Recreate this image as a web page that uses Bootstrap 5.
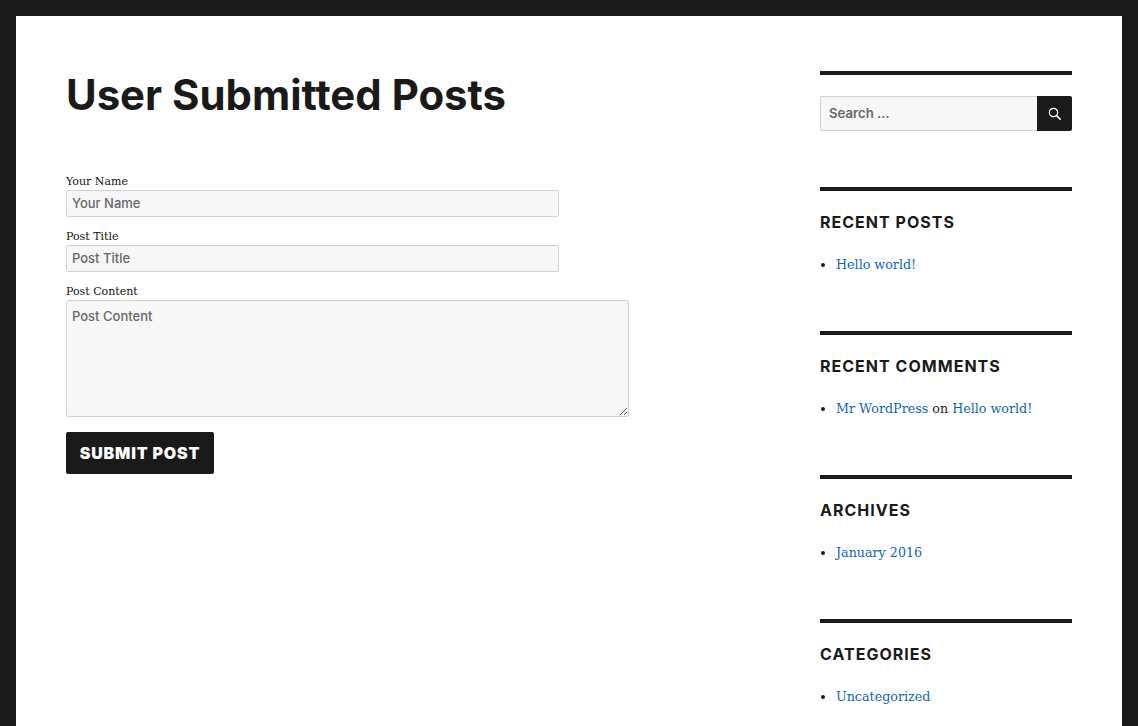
<!DOCTYPE html>
<html lang="en">
<head>
<meta charset="utf-8">
<title>User Submitted Posts</title>
<link href="https://cdn.jsdelivr.net/npm/bootstrap@5.3.0/dist/css/bootstrap.min.css" rel="stylesheet">
<style>
html, body { height: 100%; overflow: hidden; }
body { background: #1a1a1a; padding: 16px 16px 0; color: #1a1a1a; font-family: "DejaVu Serif", serif; }
.sheet { background: #fff; min-height: 760px; padding: 55px 50px 0; }
.main-col { width: 563px; }
.side-col { width: 252px; }
.post-title { font-family: Inter, "Open Sans", sans-serif; font-weight: 700; font-size: 41.9px; line-height: 48px; margin: 0 0 53px; white-space: nowrap; }
.field-label { display: block; font-size: 11px; line-height: 14px; margin: 0 0 1px; color: #111; height: 14px; }
.field-wrap { margin-bottom: 12px; height: 43px; padding-top: 3px; }
.field-wrap.tall { height: 133px; margin-bottom: 17px; }
.sheet .form-control { background: #f7f7f7; border: 1px solid #d1d1d1; border-radius: 2px; font-family: Inter, sans-serif; font-size: 13px; font-weight: 500; color: #686868; padding: 0 5px 1px; height: 27px; min-height: 0; box-shadow: none; }
.sheet .form-control::placeholder { color: #686868; opacity: 1; }
.sheet .short-input { width: 493px; }
.sheet textarea.form-control { height: 117px; width: 563px; padding: 6px 5px; }
.submit-btn { background: #1a1a1a; color: #fff; border: 0; border-radius: 2px; font-family: Inter, sans-serif; font-weight: 900; font-size: 16px; letter-spacing: .8px; width: 148px; height: 42px; padding: 0; text-transform: uppercase; }
.submit-btn:hover { background: #1a1a1a; color: #fff; }
.widget-box { border-top: 4px solid #1a1a1a; height: 144px; padding-top: 21px; }
.widget-box.first { height: 116px; }
.search-field { height: 35px; }
.sheet .search-field .form-control { height: 35px; border-radius: 2px 0 0 2px; border-right: 0; padding: 0 8px 2px; font-size: 13.2px; font-weight: 600; }
.search-btn { width: 35px; height: 35px; background: #1a1a1a; border-radius: 0 2px 2px 0; flex: none; }
.widget-head { font-family: Inter, sans-serif; font-weight: 700; font-size: 16px; letter-spacing: 1.02px; line-height: 20px; margin: 0 0 23px; text-transform: uppercase; color: #1a1a1a; }
.link-list { margin: 0; padding-left: 16px; font-size: 12.7px; line-height: 20px; }
.link-list a { text-decoration: none; color: #0d66b3; }
</style>
</head>
<body>
<div class="sheet d-flex justify-content-between">
  <main class="main-col">
    <h1 class="post-title">User Submitted Posts</h1>
    <form>
      <div class="field-wrap">
        <label class="field-label" for="n">Your Name</label>
        <input id="n" class="form-control short-input" type="text" placeholder="Your Name">
      </div>
      <div class="field-wrap">
        <label class="field-label" for="t">Post Title</label>
        <input id="t" class="form-control short-input" type="text" placeholder="Post Title">
      </div>
      <div class="field-wrap tall">
        <label class="field-label" for="c">Post Content</label>
        <textarea id="c" class="form-control" placeholder="Post Content"></textarea>
      </div>
      <button type="button" class="btn submit-btn">Submit Post</button>
    </form>
  </main>
  <aside class="side-col">
    <section class="widget-box first">
      <div class="search-field d-flex">
        <input class="form-control" type="search" placeholder="Search …">
        <div class="search-btn d-flex align-items-center justify-content-center">
          <svg width="16" height="16" viewBox="0 0 16 16" fill="none" stroke="#fff" stroke-width="1.2"><circle cx="6.5" cy="6.5" r="4.2"/><path d="M9.6 9.6 13.6 13.6" stroke-width="1.7"/></svg>
        </div>
      </div>
    </section>
    <section class="widget-box">
      <h2 class="widget-head">Recent Posts</h2>
      <ul class="link-list"><li><a href="#">Hello world!</a></li></ul>
    </section>
    <section class="widget-box">
      <h2 class="widget-head">Recent Comments</h2>
      <ul class="link-list"><li><a href="#">Mr WordPress</a> on <a href="#">Hello world!</a></li></ul>
    </section>
    <section class="widget-box">
      <h2 class="widget-head">Archives</h2>
      <ul class="link-list"><li><a href="#">January 2016</a></li></ul>
    </section>
    <section class="widget-box">
      <h2 class="widget-head">Categories</h2>
      <ul class="link-list"><li><a href="#">Uncategorized</a></li></ul>
    </section>
  </aside>
</div>
<script src="https://cdn.jsdelivr.net/npm/bootstrap@5.3.0/dist/js/bootstrap.bundle.min.js"></script>
</body>
</html>
